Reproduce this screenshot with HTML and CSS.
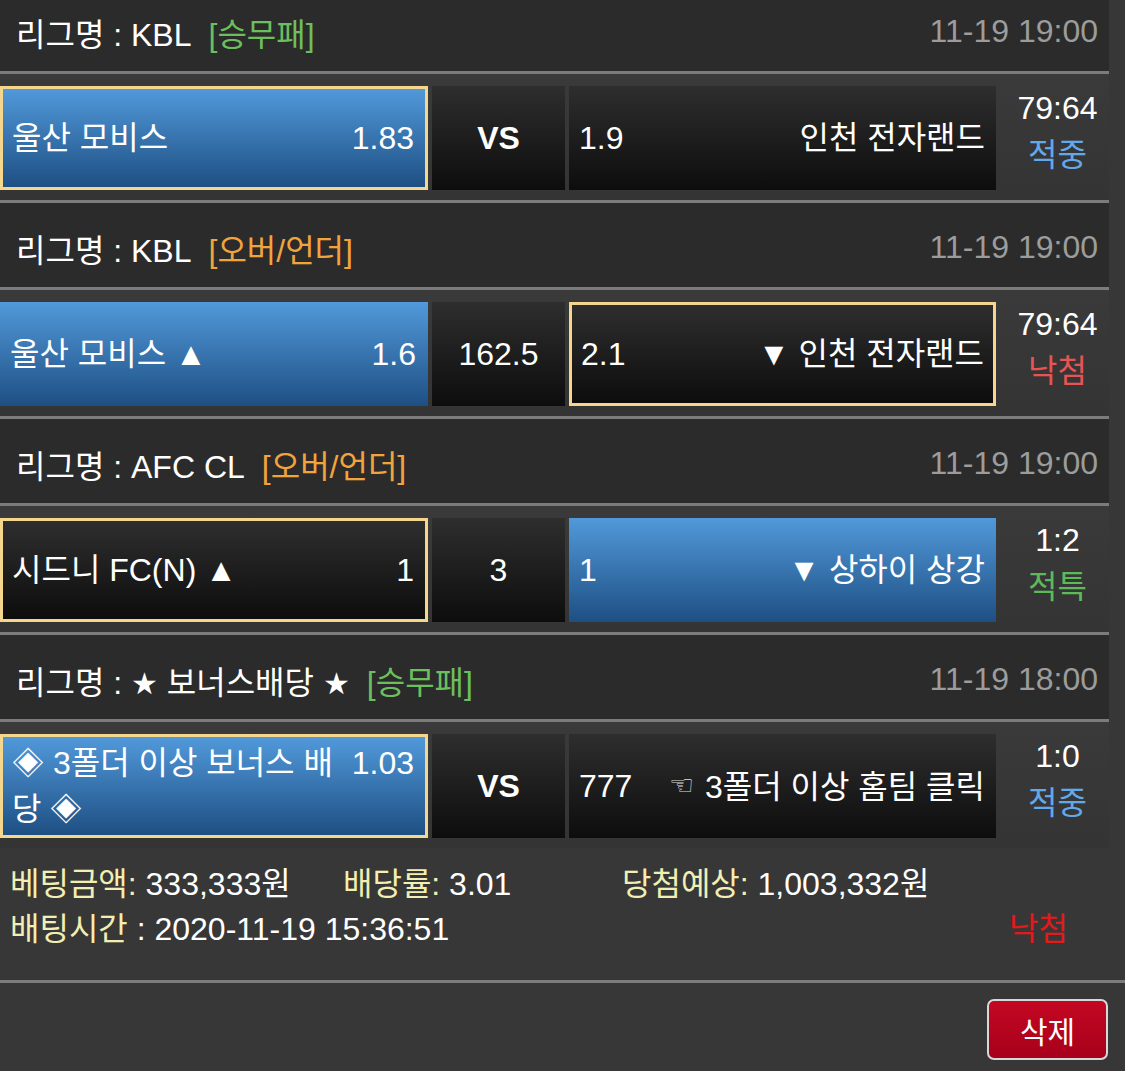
FILE: index.html
```html
<!DOCTYPE html>
<html lang="ko">
<head>
<meta charset="utf-8">
<title>베팅내역</title>
<link rel="stylesheet" href="styles.css">
</head>
<body>
<div class="page">
  <div class="game-list">
    <section class="game">
      <div class="game-head">
        <span class="league">리그명 : KBL<span class="type type-win">[승무패]</span></span>
        <span class="time">11-19 19:00</span>
      </div>
      <div class="game-row">
        <div class="pick pick-home blue selected"><span class="team">울산 모비스</span><span class="odds">1.83</span></div>
        <div class="mid vs">VS</div>
        <div class="pick pick-away dark"><span class="odds">1.9</span><span class="team">인천 전자랜드</span></div>
        <div class="result"><span class="score">79:64</span><span class="status hit">적중</span></div>
      </div>
    </section>
    <section class="game">
      <div class="game-head">
        <span class="league">리그명 : KBL<span class="type type-ou">[오버/언더]</span></span>
        <span class="time">11-19 19:00</span>
      </div>
      <div class="game-row">
        <div class="pick pick-home blue"><span class="team">울산 모비스 ▲</span><span class="odds">1.6</span></div>
        <div class="mid">162.5</div>
        <div class="pick pick-away dark selected"><span class="odds">2.1</span><span class="team">▼ 인천 전자랜드</span></div>
        <div class="result"><span class="score">79:64</span><span class="status miss">낙첨</span></div>
      </div>
    </section>
    <section class="game">
      <div class="game-head">
        <span class="league">리그명 : AFC CL<span class="type type-ou">[오버/언더]</span></span>
        <span class="time">11-19 19:00</span>
      </div>
      <div class="game-row">
        <div class="pick pick-home dark selected"><span class="team">시드니 FC(N) ▲</span><span class="odds">1</span></div>
        <div class="mid">3</div>
        <div class="pick pick-away blue"><span class="odds">1</span><span class="team">▼ 상하이 상강</span></div>
        <div class="result"><span class="score">1:2</span><span class="status special">적특</span></div>
      </div>
    </section>
    <section class="game last">
      <div class="game-head">
        <span class="league">리그명 : <span class="star">★</span> 보너스배당 <span class="star">★</span><span class="type type-win">[승무패]</span></span>
        <span class="time">11-19 18:00</span>
      </div>
      <div class="game-row">
        <div class="pick pick-home blue selected"><span class="team">◈ 3폴더 이상 보너스 배당 ◈</span><span class="odds">1.03</span></div>
        <div class="mid vs">VS</div>
        <div class="pick pick-away dark"><span class="odds">777</span><span class="team"><span class="hand">☜</span> 3폴더 이상 홈팀 클릭</span></div>
        <div class="result"><span class="score">1:0</span><span class="status hit">적중</span></div>
      </div>
    </section>
  </div>
  <div class="summary">
    <div class="summary-line">
      <span class="item item-amount"><span class="label">베팅금액:</span> 333,333원</span>
      <span class="item item-rate"><span class="label">배당률:</span> 3.01</span>
      <span class="item item-expect"><span class="label">당첨예상:</span> 1,003,332원</span>
    </div>
    <div class="summary-line">
      <span class="item"><span class="label">배팅시간</span> : 2020-11-19 15:36:51</span>
      <span class="final-status">낙첨</span>
    </div>
  </div>
  <div class="actions">
    <button class="delete-btn" type="button">삭제</button>
  </div>
</div>
</body>
</html>
```
FILE: styles.css
```css
html, body {
  margin: 0;
  padding: 0;
}
body {
  background: #373737;
  color: #ffffff;
  font-family: "Liberation Sans", "Noto Sans CJK KR", sans-serif;
  font-size: 32px;
  overflow: hidden;
}
.page {
  width: 1125px;
  height: 1071px;
  overflow: hidden;
}
.game-list {
  width: 1109px;
  margin-top: -13px;
}
.game-head {
  height: 79px;
  background: #2b2b2b;
  border-bottom: 3px solid #7c7c7c;
  display: flex;
  align-items: center;
  justify-content: space-between;
  padding: 5px 11px 0 16px;
}
.type {
  margin-left: 17px;
}
.star {
  font-family: "DejaVu Sans", sans-serif;
  font-size: 30px;
}
.type-win { color: #6cbf5d; }
.type-ou { color: #f2a43c; }
.time { color: #9c9c9c; }
.game-row {
  height: 129px;
  box-sizing: border-box;
  padding: 12px 0 10px;
  display: flex;
  gap: 4px;
  background: linear-gradient(#3a3a3a, #343434);
  border-bottom: 3px solid #7c7c7c;
}
.game.last .game-row {
  border-bottom: 0;
  height: 126px;
}
.pick {
  flex: none;
  box-sizing: border-box;
  display: flex;
  align-items: center;
  padding: 0 12px 0 10px;
}
.pick-home { width: 428px; }
.pick-away { width: 427px; padding: 0 11px 0 10px; }
.pick.selected { border: 3px solid #f4d68c; padding: 0 9px 0 9px; }
.pick-home.selected { padding-right: 11px; }
.blue { background: linear-gradient(#5199da, #1e4f83); }
.dark { background: linear-gradient(#2e2e2e, #0d0d0d); }
.pick .team {
  line-height: 46px;
}
.pick-home .team { flex: 1; min-width: 0; }
.pick-home .odds { margin-left: 12px; line-height: 46px; }
.game.last .pick-home .odds { align-self: flex-start; margin-top: 3px; }
.pick-away .odds { flex: 1; }
.pick-away .team { text-align: right; }
.hand {
  font-family: "DejaVu Sans", sans-serif;
  font-size: 28px;
  color: #dddddd;
  vertical-align: 3px;
  margin-right: 2px;
}
.mid {
  width: 133px;
  flex: none;
  display: flex;
  align-items: center;
  justify-content: center;
  background: linear-gradient(#2e2e2e, #0d0d0d);
}
.mid.vs { font-weight: bold; }
.result {
  flex: 1;
  display: flex;
  flex-direction: column;
  align-items: center;
  margin-top: -1px;
  padding-left: 6px;
  line-height: 47px;
}
.status.hit { color: #62a9e9; }
.status.miss { color: #e65454; }
.status.special { color: #5dba58; }
.summary {
  padding: 14px 0 28px 10px;
  border-bottom: 3px solid #7c7c7c;
}
.summary-line {
  display: flex;
  line-height: 45px;
}
.label { color: #f3eeb2; }
.item-amount { width: 333px; }
.item-rate { width: 279px; }
.final-status {
  margin-left: auto;
  margin-right: 57px;
  color: #e3191c;
}
.actions {
  display: flex;
  justify-content: flex-end;
  padding: 16px 17px 0 0;
}
.delete-btn {
  width: 121px;
  height: 61px;
  border: 2px solid #d8d8d8;
  border-radius: 7px;
  background: linear-gradient(#c40722, #a8001b);
  color: #ffffff;
  font-family: "Liberation Sans", "Noto Sans CJK KR", sans-serif;
  font-size: 30px;
  padding: 0;
}
```
